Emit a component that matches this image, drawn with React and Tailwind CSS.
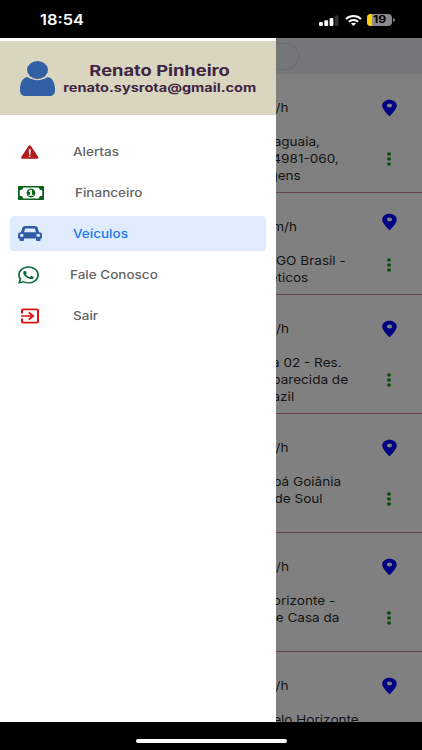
import React from 'react';
import { FaWhatsapp } from 'react-icons/fa';
import { MdExitToApp, MdPlace } from 'react-icons/md';
import { IoWarning } from 'react-icons/io5';

const vehicles = [
  {
    height: 'h-[119px]', pin: 'top-[25px]', dots: 'top-[78px]',
    speed: { text: '/h', width: 'w-[12px]' },
    lines: [
      { text: 'aguaia,', width: 'w-[44px]' },
      { text: '4981-060,', width: 'w-[63px]' },
      { text: 'gens', width: 'w-[25px]' },
    ],
  },
  {
    height: 'h-[102px]', pin: 'top-[20px]', dots: 'top-[65px]',
    speed: { text: 'm/h', width: 'w-[21px]' },
    lines: [
      { text: 'GO Brasil -', width: 'w-[70px]' },
      { text: 'éticos', width: 'w-[32px]' },
    ],
  },
  {
    height: 'h-[119px]', pin: 'top-[25px]', dots: 'top-[78px]',
    speed: { text: 'm/h', width: 'w-[13px]' },
    lines: [
      { text: 'a 02 - Res.', width: 'w-[66px]' },
      { text: 'parecida de', width: 'w-[72px]' },
      { text: 'azil', width: 'w-[18px]' },
    ],
  },
  {
    height: 'h-[119px]', pin: 'top-[25px]', dots: 'top-[78px]',
    speed: { text: '/h', width: 'w-[12px]' },
    lines: [
      { text: 'bá Goiânia', width: 'w-[65px]' },
      { text: 'de Soul', width: 'w-[47px]' },
    ],
  },
  {
    height: 'h-[119px]', pin: 'top-[25px]', dots: 'top-[78px]',
    speed: { text: 'm/h', width: 'w-[13px]' },
    lines: [
      { text: 'orizonte -', width: 'w-[59px]' },
      { text: 'e Casa da', width: 'w-[63px]' },
    ],
  },
  {
    height: 'h-[119px]', pin: 'top-[25px]', dots: 'top-[78px]',
    speed: { text: '/h', width: 'w-[12px]' },
    lines: [{ text: 'elo Horizonte', width: 'w-[83px]' }],
  },
];

const UserIcon = () => (
  <svg className="w-[35px] h-[35px]" viewBox="0 0 35 35" fill="currentColor">
    <ellipse cx="17.5" cy="9" rx="10.5" ry="8.9" />
    <path d="M7.5 16C2.5 16.6 0 22 0 29c0 4 2 6 6 6h23c4 0 6-2 6-6 0-7-2.5-12.4-7.5-13-5.800 4.200-14.200 4.200-20 0z" />
  </svg>
);

const MoneyIcon = () => (
  <svg className="w-[26px] h-[14px]" viewBox="0 256 1920 1280" preserveAspectRatio="none" fill="currentColor">
    <path d="M768 1152h384v-96h-128v-448h-114l-148 137 77 80q42-37 55-57h2v288h-128v96zm512-256q0 70-21 142t-59.5 134-101.5 101-138 39-138-39-101.5-101-59.5-134-21-142 21-142 59.5-134 101.5-101 138-39 138 39 101.5 101 59.5 134 21 142zm512 256v-512q-106 0-181-75t-75-181h-1152q0 106-75 181t-181 75v512q106 0 181 75t75 181h1152q0-106 75-181t181-75zm128-832v1152q0 26-19 45t-45 19h-1792q-26 0-45-19t-19-45v-1152q0-26 19-45t45-19h1792q26 0 45 19t19 45z" />
  </svg>
);

const CarIcon = () => (
  <svg className="w-[24px] h-[15px]" viewBox="0 128 2048 1536" preserveAspectRatio="none" fill="currentColor">
    <path d="M480 1088q0-66-47-113t-113-47-113 47-47 113 47 113 113 47 113-47 47-113zm36-320h1016l-89-357q-2-8-14-17.5t-21-9.5h-768q-9 0-21 9.5t-14 17.5zm1372 320q0-66-47-113t-113-47-113 47-47 113 47 113 113 47 113-47 47-113zm160-96v384q0 14-9 23t-23 9h-96v128q0 80-56 136t-136 56-136-56-56-136v-128h-1024v128q0 80-56 136t-136 56-136-56-56-136v-128h-96q-14 0-23-9t-9-23v-384q0-93 65.5-158.5t158.5-65.5h28l105-419q23-94 104-157.5t179-63.5h768q98 0 179 63.5t104 157.5l105 419h28q93 0 158.5 65.5t65.5 158.5z" />
  </svg>
);

const menu = [
  {
    label: 'Alertas', pad: 'pl-[9px]', gap: 'w-[54px]', color: 'text-[#b01c1c]',
    icon: <IoWarning preserveAspectRatio="none" className="w-[22px] h-[18px]" />,
  },
  {
    label: 'Financeiro', pad: 'pl-[8px]', gap: 'w-[57px]', color: 'text-[#0a6018]',
    icon: <MoneyIcon />,
  },
  {
    label: 'Veículos', pad: 'pl-[8px]', gap: 'w-[55px]', color: 'text-[#2f5da6]', active: true,
    icon: <CarIcon />,
  },
  {
    label: 'Fale Conosco', pad: 'pl-[8px]', gap: 'w-[52px]', color: 'text-[#0b6b35]',
    icon: <FaWhatsapp preserveAspectRatio="none" className="w-[21px] h-[20px]" />,
  },
  {
    label: 'Sair', pad: 'pl-[8px]', gap: 'w-[55px]', color: 'text-[#e01414]',
    icon: <MdExitToApp preserveAspectRatio="none" className="w-[24px] h-[20px]" />,
  },
];

const StatusBar = () => (
  <div className="h-[38px] shrink-0 bg-black text-white flex items-center pl-10 pr-[27px] pt-[2px]">
    <span className="text-[14px] leading-none font-semibold origin-left scale-x-[1.17]">18:54</span>
    <div className="ml-auto flex items-center">
      <svg className="w-[20px] h-[11px]" viewBox="0 0 20 11">
        <rect x="0" y="7" width="3.800" height="4" rx="1" fill="#fff" />
        <rect x="5.300" y="5.200" width="3.800" height="5.800" rx="1" fill="#fff" />
        <rect x="10.600" y="3" width="3.800" height="8" rx="1" fill="#fff" />
        <rect x="15.700" y="0.500" width="3.800" height="10.500" rx="1" fill="#333" />
      </svg>
      <svg className="w-[17px] h-[11px] ml-[6px]" viewBox="0 0 17 11" fill="none" stroke="#fff" strokeWidth="2">
        <path d="M1 4.1C5.2.1 11.8.1 16 4.1" />
        <path d="M3.8 6.8c2.7-2.5 6.7-2.5 9.4 0" />
        <path d="M5.9 8.6c1.5-1.3 3.7-1.3 5.2 0L8.500 11z" fill="#fff" stroke="none" />
      </svg>
      <div className="ml-[5px] w-[25px] h-[12px] rounded-[4px] overflow-hidden bg-[#8a8a8d] flex justify-center relative">
        <div className="absolute left-0 inset-y-0 w-[5px] bg-[#fdd00b]" />
        <span className="relative text-[10.5px] leading-[12px] font-bold text-black scale-x-[1.17]">19</span>
      </div>
      <div className="w-[2px] h-[4px] ml-px rounded-r-full bg-[#777]" />
    </div>
  </div>
);

const Line = ({ text, width }) => (
  <div className={`${width} h-[17px] flex justify-end`}>
    <span className="shrink-0 whitespace-nowrap origin-right scale-x-[1.13] text-[12px] leading-[17px]">{text}</span>
  </div>
);

const VehicleRow = ({ vehicle }) => (
  <div className={`${vehicle.height} shrink-0 relative border-b border-[#674347] pt-[25px]`}>
    <Line {...vehicle.speed} />
    <div className="mt-[17px]">
      {vehicle.lines.map((line) => (
        <Line key={line.text} {...line} />
      ))}
    </div>
    <MdPlace preserveAspectRatio="none" className={`absolute left-[100.5px] w-[25px] h-[20px] -mt-px text-[#000084] ${vehicle.pin}`} />
    <svg className={`absolute left-[111px] w-[4px] h-[14px] ${vehicle.dots}`} viewBox="0 0 4 14" fill="#0b4a10">
      <ellipse cx="2" cy="2" rx="2" ry="1.8" />
      <ellipse cx="2" cy="7" rx="2" ry="1.8" />
      <ellipse cx="2" cy="12" rx="2" ry="1.8" />
    </svg>
  </div>
);

const Drawer = () => (
  <aside className="w-[276px] shrink-0 bg-white relative z-10">
    <div className="mt-[3px] h-[74px] bg-[#dad5be] flex pl-5">
      <div className="pt-[20px] text-[#3160a5]">
        <UserIcon />
      </div>
      <div className="ml-[5px] w-[200px] pt-[20px] flex flex-col items-center font-bold text-[#402643] whitespace-nowrap">
        <span className="text-[15px] leading-[20px] scale-x-[1.22]">Renato Pinheiro</span>
        <span className="text-[12px] leading-[13px] scale-x-[1.21]">renato.sysrota@gmail.com</span>
      </div>
    </div>
    <nav className="mt-[19px] mx-[10px] flex flex-col gap-[6.2px]">
      {menu.map((item) => (
        <div
          key={item.label}
          className={`h-[35px] rounded-[4px] flex items-center ${item.pad} ${item.active ? 'bg-[#deecfe]' : ''}`}
        >
          <div className={`${item.gap} ${item.color}`}>{item.icon}</div>
          <span
            className={`text-[12px] leading-none font-medium origin-left scale-x-[1.125] ${item.active ? 'text-[#1877f2]' : 'text-[#646464]'}`}
          >
            {item.label}
          </span>
        </div>
      ))}
    </nav>
  </aside>
);

const App = () => {
  return (
    <div className="w-[422px] h-[750px] overflow-hidden bg-black flex flex-col font-['Inter',sans-serif]">
      <StatusBar />
      <div className="h-[684px] flex">
        <Drawer />
        {/* Vehicle list behind the drawer */}
        <main className="w-[146px] h-full overflow-hidden bg-[#808080] text-[#141414] flex flex-col">
          <div className="h-[36px] shrink-0 bg-[#747678] pt-[5px]">
            <div className="w-[23px] h-[27px] rounded-r-full border border-l-0 border-[#6c6d6f]" />
          </div>
          {vehicles.map((vehicle, i) => (
            <VehicleRow key={i} vehicle={vehicle} />
          ))}
        </main>
      </div>
      <div className="h-[28px] flex justify-center pt-[17px]">
        <div className="w-[151px] h-[4px] rounded-full bg-white" />
      </div>
    </div>
  );
};

export default App;
